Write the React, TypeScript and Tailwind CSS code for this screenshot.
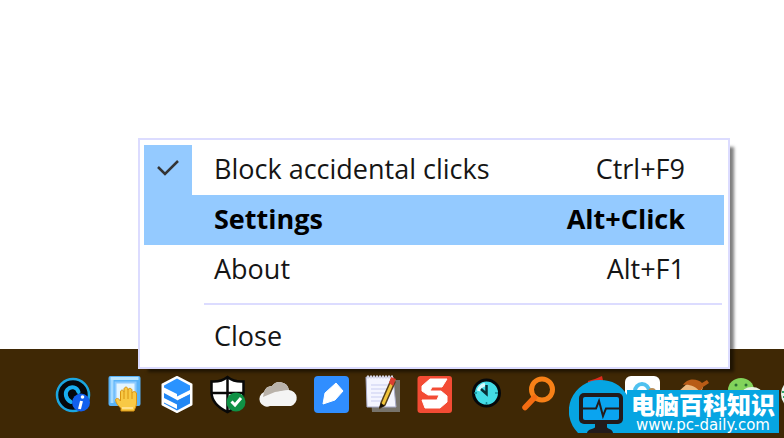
import React, { useState } from 'react';

interface IconProps {
  children: React.ReactNode;
}

const Icon: React.FC<IconProps> = ({ children }) => (
  <svg viewBox="0 0 36 36" className="block size-9 overflow-visible" aria-hidden="true">
    {children}
  </svg>
);

const InfoRingIcon = () => (
  <Icon>
    <circle cx="18" cy="18" r="16" fill="#05080c" stroke="#1ba6e0" strokeWidth="2.500" />
    <path d="M16 25C10.500 22 9.500 16 12.500 12.500C16 8.500 22 10 23.500 15" fill="none" stroke="#18aef0" strokeWidth="4" strokeLinecap="round" />
    <circle cx="26" cy="25.500" r="9" fill="#1260ee" />
    <path d="M26.500 24L24.500 32" stroke="#fff" strokeWidth="3" />
    <circle cx="27.500" cy="20" r="1.800" fill="#fff" />
  </Icon>
);

const HandWindowIcon = () => (
  <Icon>
    <rect x="1.500" y="-1" width="32" height="30" rx="2" fill="#58b2f7" />
    <rect x="3.500" y="0" width="28" height="3" fill="#b9e5ff" />
    <rect x="3.500" y="3" width="3" height="23" fill="#a5daff" />
    <rect x="8.500" y="5.500" width="20" height="18" fill="#e4f5ff" stroke="#8ccaff" strokeWidth="2" />
    <path d="M14 34V31C11 29 9 26 8.500 23C9 20.500 11.500 21 13.500 24V15C13.500 12.500 16.500 12.500 17 15V12C17.500 9.500 20.500 9.500 21 12V13C21.500 10.500 25 11 25 13.500V16C26 14 29.500 14 29.500 17V26C29.500 29 28 31 27 34Z" fill="#f8c945" stroke="#d99413" strokeWidth="1" />
    <path d="M17 15V22M21 13V22M25 16V22" stroke="#d99413" strokeWidth="1" fill="none" />
    <path d="M15 31H26" stroke="#ffe08a" strokeWidth="2" />
  </Icon>
);

const HexBookIcon = () => (
  <Icon>
    <path d="M18 0L32.500 7.500V27.500L18 35L3.500 27.500V7.500Z" fill="#fff" stroke="#fff" strokeWidth="2" strokeLinejoin="round" />
    <path d="M18 1.500L31 8.500V13L18 19.500L5 12.500V8.500Z" fill="#2a93ff" />
    <path d="M4 10L18 17V22L5 15Z" fill="#fff" />
    <path d="M5 16L18 23L31 16.500V26.500L18 33.500L5 26.500Z" fill="#2187f5" />
    <path d="M18 21L31 14.500V17L18 23.500Z" fill="#fff" />
    <path d="M4 20.500L18 27.500V32L4 25Z" fill="#fff" />
  </Icon>
);

const ShieldIcon = () => (
  <Icon>
    <path d="M17.500 0C13 3.500 7 5 1.500 4.500V15C1.500 24 9 31 17.500 35C26 31 33.500 24 33.500 15V4.500C28 5 22 3.500 17.500 0Z" fill="#fff" stroke="#080808" strokeWidth="2.500" />
    <path d="M17.500 1V34M2 16H33" stroke="#080808" strokeWidth="2.500" />
    <circle cx="26" cy="25" r="9.500" fill="#0f9145" />
    <path d="M21.500 24.500L25 28L31 21" fill="none" stroke="#fff" strokeWidth="3" />
  </Icon>
);

const CloudIcon = () => (
  <Icon>
    <path d="M8 29A7.500 7.500 0 0 1 2 15A8.500 8.500 0 0 1 10 9A9.500 9.500 0 0 1 27 13A8.200 8.200 0 0 1 29 29Z" fill="#f4f4f4" />
    <path d="M1 20L13 15L27 13A9.500 9.500 0 0 0 10 9A8.500 8.500 0 0 0 2 15Z" fill="#b9b2aa" />
    <path d="M1 22L8 18L19 14L27 13L14 28Z" fill="#f4f4f4" />
  </Icon>
);

const PenTileIcon = () => (
  <Icon>
    <rect x="0" y="-1" width="35" height="37" rx="4" fill="#308eff" />
    <path d="M9 27L11 16L22 6L29 14L21 23Z" fill="#fff" stroke="#fff" strokeLinejoin="round" />
  </Icon>
);

const NotepadIcon = () => (
  <Icon>
    <path d="M4 3H34V35H6Z" fill="#77736b" />
    <path d="M0 0H27L30 30H1Z" fill="#f4f5ff" stroke="#a9abc9" strokeWidth="1" />
    <path d="M1 0H27" stroke="#d8d8e8" strokeWidth="3" strokeDasharray="2 1" />
    <path d="M5 8H22M5 12H21M5 16H20M5 20H18M5 24H15" stroke="#c9cdf0" strokeWidth="1" />
    <path d="M25 3L29 5L19 28L14 31L15 26Z" fill="#f2c53c" stroke="#574019" strokeWidth="1.500" />
    <path d="M25 0L30 2L27 9L23 6Z" fill="#db4032" />
    <path d="M13 31L15 26L19 29Z" fill="#171008" />
  </Icon>
);

const SnagIcon = () => (
  <Icon>
    <rect x="0.500" y="-1" width="34.500" height="37" rx="3" fill="#f34b34" />
    <path d="M30 2H13L5 9V14L11 18H22L20 23H5L8 31H23L30 25V19L24 14H13L15 10H25Z" fill="#fff" stroke="#fff" strokeLinejoin="round" />
  </Icon>
);

const ClockIcon = () => (
  <Icon>
    <circle cx="17.500" cy="16" r="13" fill="#43dce7" stroke="#05080b" strokeWidth="3" />
    <path d="M9.500 14A9 9 0 0 1 16 7.500" fill="none" stroke="#d4fbff" strokeWidth="3.500" />
    <path d="M17.500 8V17L12 12" fill="none" stroke="#082f38" strokeWidth="2.500" />
    <path d="M17.500 25V28M26 16H29M5 16H8" stroke="#158c99" strokeWidth="1.500" />
  </Icon>
);

const SearchIcon = () => (
  <Icon>
    <circle cx="21" cy="12.500" r="10.500" fill="none" stroke="#f78017" strokeWidth="5" />
    <path d="M13.500 20.500L4 30.500" stroke="#f46c12" strokeWidth="5.500" strokeLinecap="round" />
  </Icon>
);

const RedFlagIcon = () => (
  <Icon>
    <path d="M15 4L22 2L29 -1L32 12H15Z" fill="#dc2b1d" />
  </Icon>
);

const CloudSyncIcon = () => (
  <Icon>
    <rect x="0" y="-1" width="35" height="36" rx="6" fill="#fff" />
    <circle cx="17" cy="14" r="7" fill="none" stroke="#4fc1ef" strokeWidth="4" />
    <circle cx="27" cy="15" r="4" fill="#b68b55" />
  </Icon>
);

const AcornIcon = () => (
  <Icon>
    <path d="M2 15L13 5L27 10L25 16H2Z" fill="#edbb82" />
    <path d="M7 8C12 0 22 2 26 6L31 3L33 6L27 10L24 15C20 9 13 7 7 8Z" fill="#b85b16" />
  </Icon>
);

const ChatIcon = () => (
  <Icon>
    <ellipse cx="13" cy="13" rx="13" ry="12" fill="#82d35b" />
    <ellipse cx="24" cy="18" rx="11" ry="8" fill="#e8f3e4" />
    <circle cx="8" cy="8" r="1.500" fill="#2c7034" />
    <circle cx="18" cy="8" r="1.500" fill="#2c7034" />
  </Icon>
);

const GlobeIcon = () => (
  <Icon>
    <circle cx="17" cy="17" r="16" fill="#e8f8ee" />
    <path d="M2 15H20M3 20H20" stroke="#2da568" strokeWidth="2" />
  </Icon>
);

const trayItems = [
  { name: 'Info', icon: InfoRingIcon },
  { name: 'Touchpad', icon: HandWindowIcon },
  { name: 'Library', icon: HexBookIcon },
  { name: 'Security', icon: ShieldIcon },
  { name: 'Cloud', icon: CloudIcon },
  { name: 'Pen', icon: PenTileIcon },
  { name: 'Notepad', icon: NotepadIcon },
  { name: 'Capture', icon: SnagIcon },
  { name: 'Clock', icon: ClockIcon },
  { name: 'Search', icon: SearchIcon },
  { name: 'Flag', icon: RedFlagIcon },
  { name: 'Sync', icon: CloudSyncIcon },
  { name: 'Acorn', icon: AcornIcon },
  { name: 'Chat', icon: ChatIcon },
  { name: 'Network', icon: GlobeIcon },
];

interface MenuRowProps {
  label: string;
  shortcut?: string;
  active?: boolean;
}

const MenuRow: React.FC<MenuRowProps> = ({ label, shortcut, active }) => (
  <button
    type="button"
    className={`flex h-[50px] w-full items-center justify-between pr-[39px] pb-0.5 pl-[70px] text-left ${active ? 'bg-[#94caff] font-bold text-black' : ''}`}
  >
    <span>{label}</span>
    {shortcut && <span>{shortcut}</span>}
  </button>
);

const TrayMenu = () => {
  const [blocked, setBlocked] = useState(true);

  return (
    <div className="absolute bottom-[69px] left-[138px] w-[592px] border-2 border-[#dcdcff] bg-white px-1 py-[5px] font-['Open_Sans','Noto_Sans',sans-serif] text-[27px] leading-8 text-[#151515] shadow-[7px_6px_3px_-3px_rgba(0,0,0,0.5)]">
      <label className="flex h-[50px] items-center pr-[39px]">
        <span className="relative flex h-full w-12 items-center justify-center bg-[#94caff]">
          <input
            type="checkbox"
            checked={blocked}
            onChange={e => setBlocked(e.target.checked)}
            className="absolute inset-0 appearance-none"
          />
          {blocked && (
            <svg viewBox="0 0 24 20" className="h-5 w-6" aria-hidden="true">
              <path d="M2 7L9 14L22 1" fill="none" stroke="#343434" strokeWidth="2.500" />
            </svg>
          )}
        </span>
        <span className="grow pb-0.5 pl-[22px]">Block accidental clicks</span>
        <span className="pb-0.5">Ctrl+F9</span>
      </label>
      <MenuRow label="Settings" shortcut="Alt+Click" active />
      <MenuRow label="About" shortcut="Alt+F1" />
      <hr className="mt-2 mr-0.5 mb-[7px] ml-[60px] border-t-2 border-[#dcdcff]" />
      <MenuRow label="Close" />
    </div>
  );
};

const SiteBadge = () => (
  <a href="#pc-daily" className="absolute right-[5px] bottom-[5px] flex items-end text-white">
    <svg viewBox="0 0 58 53" className="h-[53px] w-[58px]" aria-hidden="true">
      <path d="M9 53A31 31 0 0 1 31 0C43 0 52 5 58 15V53Z" fill="#06a5e2" />
      <rect x="10" y="13" width="44" height="31" rx="5" fill="#231b1b" />
      <rect x="14" y="17" width="36" height="23" rx="2" fill="#0aa4f0" />
      <path d="M26 43H38V47C38 49 44 49 44 53H18C18 49 26 49 26 47Z" fill="#231b1b" />
      <path d="M14 28.500H27L30 21L34 36L37 28.500H50" fill="none" stroke="#231b1b" strokeWidth="2" />
    </svg>
    <span className="flex h-[43px] flex-col bg-[#06a5e2] px-1 text-center">
      <span className="font-['Noto_Sans_CJK_SC',sans-serif] text-[24px] leading-7 font-black whitespace-nowrap">电脑百科知识</span>
      <span className="font-['DejaVu_Sans',sans-serif] text-[15px] leading-[14px] whitespace-nowrap">www.pc-daily.com</span>
    </span>
  </a>
);

export default function App() {
  return (
    <div className="relative flex h-screen flex-col justify-end overflow-hidden bg-white">
      <footer className="flex h-[89px] items-start justify-between bg-[#3f2805] pt-7 pl-[55px]">
        <div className="-mr-8 flex grow justify-between">
          {trayItems.map(({ name, icon: TrayIcon }) => (
            <button key={name} type="button" aria-label={name} className="shrink-0">
              <TrayIcon />
            </button>
          ))}
        </div>
      </footer>
      <TrayMenu />
      <SiteBadge />
    </div>
  );
}
